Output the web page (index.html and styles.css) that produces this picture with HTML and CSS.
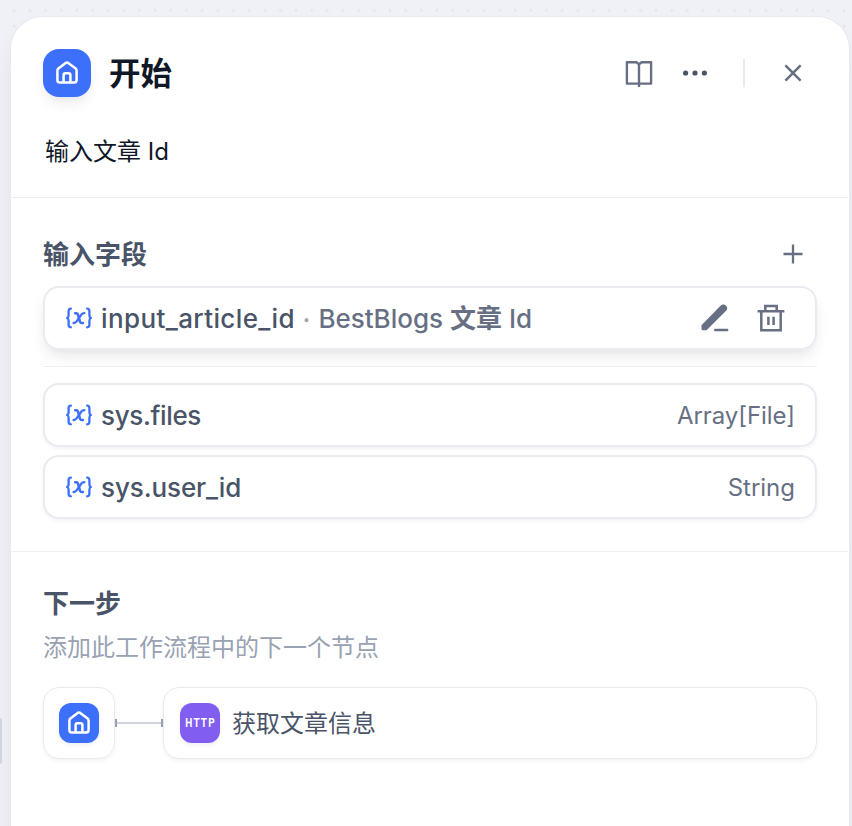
FILE: index.html
```html
<!DOCTYPE html>
<html lang="zh-CN">
<head>
<meta charset="utf-8">
<title>开始</title>
<link rel="stylesheet" href="styles.css">
</head>
<body>
<svg class="defs" width="0" height="0" aria-hidden="true">
  <symbol id="home" viewBox="0 0 24 24">
    <path d="M2.4 9.6 Q2.4 8.3 3.4 7.5 L10.7 1.9 Q12 1 13.3 1.9 L20.6 7.5 Q21.6 8.3 21.6 9.6 V19 Q21.6 21.6 19 21.6 H5 Q2.4 21.6 2.4 19 Z M8.6 21.4 V14 Q8.6 12.3 10.3 12.3 H13.7 Q15.4 12.3 15.4 14 V21.4" fill="none" stroke="#fff" stroke-width="2.5" stroke-linejoin="round"/>
  </symbol>
  <symbol id="variable" viewBox="0 0 28 22">
    <g fill="none" stroke="#3d70fa" stroke-width="2.3" stroke-linecap="round" stroke-linejoin="round">
      <path d="M5.9 1.6 C4.2 1.6 3.6 2.5 3.6 4.2 V8.2 C3.6 9.9 3 10.7 2.1 11 C2.9 11.3 3.6 12.2 3.6 13.8 V17.6 C3.6 19.4 4.2 20.3 5.9 20.3"/>
      <path d="M22.1 1.6 C23.8 1.6 24.4 2.5 24.4 4.2 V8.2 C24.4 9.9 25 10.7 25.9 11 C25.1 11.3 24.4 12.2 24.4 13.8 V17.6 C24.4 19.4 23.8 20.3 22.1 20.3"/>
      <path d="M10.2 6.2 H11.2 C12.2 6.2 12.7 6.7 13 7.6 L15 14.6 C15.3 15.5 15.8 16 16.7 16 H17.9" stroke-width="2.6"/>
      <path d="M19.4 6.2 C17.9 6.1 17.1 6.7 16.2 7.8 L11.6 14.4 C10.7 15.6 9.9 16.1 8.6 16" stroke-width="2.3"/>
    </g>
  </symbol>
</svg>
<div class="handle"></div>
<main class="panel">
  <header class="header">
    <div class="title-row">
      <span class="node-icon node-icon-lg"><svg width="24" height="24"><use href="#home"/></svg></span>
      <h1>开始</h1>
      <div class="actions">
        <svg class="book" width="28" height="28" viewBox="0 0 28 28" fill="none" stroke="#676f83" stroke-width="2.4" stroke-linejoin="round"><path d="M14 5.2 L11.4 3.2 H1.9 V24.6 H26.1 V3.2 H16.6 Z M14 5.2 V28"/></svg>
        <svg class="more" width="26" height="6" viewBox="0 0 26 6" fill="#495464"><circle cx="3.6" cy="3" r="2.6"/><circle cx="13" cy="3" r="2.6"/><circle cx="22.4" cy="3" r="2.6"/></svg>
        <i class="separator"></i>
        <svg class="close" width="18" height="18" viewBox="0 0 18 18" stroke="#676f83" stroke-width="2.5"><path d="M1.4 1.4 L16.6 16.6 M16.6 1.4 L1.4 16.6"/></svg>
      </div>
    </div>
    <p class="description">输入文章 Id</p>
  </header>

  <section class="inputs">
    <div class="section-head">
      <h2>输入字段</h2>
      <svg width="20" height="20" viewBox="0 0 20 20" stroke="#676f83" stroke-width="2.3"><path d="M0.5 10 H19.5 M10 0.5 V19.5"/></svg>
    </div>
    <div class="field field-raised">
      <svg class="var" width="28" height="22"><use href="#variable"/></svg>
      <span class="name name-input">input_article_id</span>
      <span class="dot">·</span>
      <span class="label">BestBlogs <b>文章</b> Id</span>
      <div class="field-actions">
        <svg width="28" height="28" viewBox="0 0 28 28" fill="none" stroke="#676f83"><path d="M3 22.2 V25.2 H6 L24.8 6.5 C27 4.2 24 1.1 21.6 3.4 Z" fill="#676f83" stroke-width="3" stroke-linejoin="round" transform="translate(-1 -.5)"/><path d="M14.2 26 H26.2" stroke-width="2.4" stroke-linecap="round"/></svg>
        <svg width="28" height="28" viewBox="0 0 28 28" fill="none" stroke="#676f83" stroke-width="2.5"><path d="M.6 7.3 H27.4 M4.3 7.3 V26.2 H23.7 V7.3 M8.3 7.3 V2 H19.7 V7.3 M11.4 12.8 V21 M16.6 12.8 V21"/></svg>
      </div>
    </div>
    <hr>
    <div class="field">
      <svg class="var" width="28" height="22"><use href="#variable"/></svg>
      <span class="name name-files">sys.files</span>
      <span class="type type-file">Array[File]</span>
    </div>
    <div class="field">
      <svg class="var" width="28" height="22"><use href="#variable"/></svg>
      <span class="name name-user">sys.user_id</span>
      <span class="type type-string">String</span>
    </div>
  </section>

  <section class="next">
    <h2>下一步</h2>
    <p class="hint">添加此工作流程中的下一个节点</p>
    <div class="flow">
      <div class="card start"><span class="node-icon"><svg width="24" height="24"><use href="#home"/></svg></span></div>
      <div class="connector"></div>
      <div class="card target">
        <span class="node-icon http"><svg width="40" height="40"><text transform="translate(5.3 24.3) scale(.8 1)">HTTP</text></svg></span>
        <span class="target-name">获取文章信息</span>
      </div>
    </div>
  </section>
</main>
</body>
</html>
```
FILE: styles.css
```css
* { box-sizing: border-box; }

body {
  margin: 0;
  height: 826px;
  overflow: hidden;
  padding: 17px 3px 0 11px;
  background-color: #f0f1f6;
  background-image: radial-gradient(circle at 50% 50%, #e3e4e9 1.1px, transparent 1.7px);
  background-size: 15.66px 15.66px;
  background-position: 6.4px 2.7px;
  font-family: Inter, "Noto Sans CJK SC", sans-serif;
  color: #495468;
}

h1, h2, p { margin: 0; }
svg { display: block; flex: none; }
.defs { position: absolute; }

.handle {
  position: absolute;
  left: 0;
  top: 718px;
  width: 2px;
  height: 46px;
  background: #d0d5dd;
  border-radius: 0 2px 2px 0;
}

.panel {
  height: 840px;
  background: #fff;
  border-radius: 32px 32px 0 0;
  box-shadow: 0 0 0 1px #e9eaf0, 0 16px 24px rgba(16, 24, 40, .06);
}

.header {
  height: 181px;
  padding: 32px 32px 0;
  border-bottom: 1px solid #eff0f3;
}

.title-row { display: flex; align-items: center; height: 48px; }

.node-icon {
  display: flex;
  align-items: center;
  justify-content: center;
  flex: none;
  width: 40px;
  height: 40px;
  border-radius: 12px;
  background: #3d70fa;
  box-shadow: 0 2px 4px rgba(16, 24, 40, .07);
}

.node-icon-lg {
  width: 48px;
  height: 48px;
  border-radius: 16px;
  box-shadow: 0 8px 16px -4px rgba(16, 24, 40, .1), 0 4px 6px -4px rgba(16, 24, 40, .05);
}

h1 {
  margin-left: 18px;
  padding-top: 2px;
  font-size: 31.5px;
  line-height: 48px;
  font-weight: 700;
  color: #101828;
}

.actions { display: flex; align-items: center; margin-left: auto; }
.more { margin-left: 29px; }
.separator { width: 2px; height: 28px; margin-left: 35px; background: #e9eaf0; }
.close { margin: 0 15px 0 39px; }

.description {
  margin: 37px 0 0 2px;
  font-size: 24px;
  line-height: 36px;
  color: #101828;
}

.inputs {
  height: 354px;
  padding: 40px 32px 0;
  border-bottom: 1px solid #eff0f3;
}

.section-head {
  display: flex;
  align-items: center;
  justify-content: space-between;
  height: 34px;
  padding-right: 14px;
}

.section-head svg { margin-bottom: 2px; }

h2 { font-size: 26px; line-height: 34px; font-weight: 700; }

.field {
  display: flex;
  align-items: center;
  height: 64px;
  margin-bottom: 8px;
  padding: 0 20px;
  border: 2px solid #eaebf1;
  border-radius: 16px;
  box-shadow: 0 2px 4px rgba(16, 24, 40, .05);
}

.field-raised {
  margin: 14px 0 16px;
  box-shadow: 0 8px 16px -3px rgba(16, 24, 40, .1), 0 4px 6px -4px rgba(16, 24, 40, .06);
}

.name { margin-left: 8px; padding-top: 2px; font-size: 26px; line-height: 36px; font-weight: 500; }
.name-input { letter-spacing: .39px; }
.name-files { letter-spacing: -.35px; }
.name-user { letter-spacing: -.1px; }
.dot { margin: 0 8px 0 7.6px; padding-top: 2px; font-size: 26px; font-weight: 500; color: #98a2b2; }
.label { padding-top: 2px; font-size: 26px; line-height: 36px; font-weight: 500; color: #676f83; }
.field-actions { display: flex; gap: 28px; margin-left: auto; padding-right: 10px; }
.type { margin-left: auto; padding-top: 2px; font-size: 24px; line-height: 36px; color: #676f83; }
.type-file { letter-spacing: -.05px; }

hr { height: 1px; margin: 0 0 16px; border: 0; background: #eff0f3; }

.next { padding: 35px 32px 0; }

.hint {
  margin-top: 9px;
  font-size: 24px;
  line-height: 36px;
  color: #98a2b2;
}

.flow { display: flex; align-items: center; margin-top: 21px; }

.card {
  display: flex;
  align-items: center;
  height: 72px;
  border: 1px solid #e9eaee;
  border-radius: 16px;
  box-shadow: 0 2px 4px rgba(16, 24, 40, .05);
}

.start { width: 72px; justify-content: center; }
.target { flex: 1; padding-left: 16px; }

.connector {
  width: 48px;
  height: 8px;
  border: solid #98a2b2;
  border-width: 0 2px;
  background: linear-gradient(#d0d5dd, #d0d5dd) center / 100% 2px no-repeat;
}

.http { background: #815eef; }
.http text { font: 700 12.5px Roboto, sans-serif; letter-spacing: 1.5px; fill: #fff; }
.target-name { margin-left: 12px; padding-top: 2px; font-size: 24px; line-height: 36px; }
```
